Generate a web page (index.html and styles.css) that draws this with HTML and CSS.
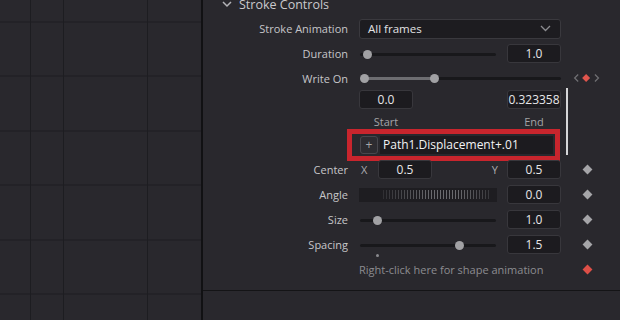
FILE: index.html
```html
<!DOCTYPE html>
<html lang="en">
<head>
    <meta charset="UTF-8">
    <title>Stroke Controls</title>
    <link rel="stylesheet" href="styles.css">
</head>
<body>
    <div id="app">
        <div id="viewer"></div>

        <div id="inspector">
            <div class="section-head">
                <svg class="chev" width="10" height="7" viewBox="0 0 10 7"><path d="M1 1 L5 5 L9 1" fill="none" stroke="#b4b4b8" stroke-width="1.5"/></svg>
                <span>Stroke Controls</span>
            </div>

            <div class="row">
                <div class="label">Stroke Animation</div>
                <div class="combo">
                    <span>All frames</span>
                    <svg width="11" height="7" viewBox="0 0 11 7"><path d="M1 1 L5.5 5.5 L10 1" fill="none" stroke="#8c8c90" stroke-width="1.3"/></svg>
                </div>
            </div>

            <div class="row">
                <div class="label">Duration</div>
                <div class="ctl">
                    <div class="slider"><span class="thumb" style="left: 8px"></span></div>
                    <div class="num">1.0</div>
                </div>
            </div>

            <div class="row row-write">
                <div class="label">Write On</div>
                <div class="slider wide">
                    <span class="fill" style="left: 5px; width: 70px"></span>
                    <span class="thumb" style="left: 5px"></span>
                    <span class="thumb" style="left: 75px"></span>
                </div>
                <div class="key">
                    <svg width="34" height="14" viewBox="0 0 34 14">
                        <path d="M7 3 L3 7 L7 11" fill="none" stroke="#707074" stroke-width="1.4"/>
                        <path d="M16 2.5 L20.5 7 L16 11.5 L11.5 7 Z" fill="#e0554d"/>
                        <path d="M26 3 L30 7 L26 11" fill="none" stroke="#707074" stroke-width="1.4"/>
                    </svg>
                </div>
            </div>

            <div class="row row-values">
                <div class="label"></div>
                <div class="ctl">
                    <div class="num">0.0</div>
                    <div class="num">0.323358</div>
                </div>
            </div>

            <div class="row row-caption">
                <div class="label"></div>
                <div class="ctl">
                    <div class="caption">Start</div>
                    <div class="caption">End</div>
                </div>
            </div>

            <div class="row row-expr">
                <div class="label"></div>
                <div class="expr">
                    <div class="plus">+</div>
                    <div class="expr-field">Path1.Displacement+.01</div>
                </div>
            </div>

            <div class="row row-center">
                <div class="label">Center</div>
                <div class="xy">
                    <span class="axis">X</span>
                    <div class="num">0.5</div>
                    <span class="axis axis-y">Y</span>
                    <div class="num">0.5</div>
                </div>
                <div class="key"><span class="diamond"></span></div>
            </div>

            <div class="row">
                <div class="label">Angle</div>
                <div class="ctl">
                    <div class="wheel"><span class="ticks"></span></div>
                    <div class="num">0.0</div>
                </div>
                <div class="key"><span class="diamond"></span></div>
            </div>

            <div class="row">
                <div class="label">Size</div>
                <div class="ctl">
                    <div class="slider"><span class="thumb" style="left: 18px"></span></div>
                    <div class="num">1.0</div>
                </div>
                <div class="key"><span class="diamond"></span></div>
            </div>

            <div class="row">
                <div class="label">Spacing</div>
                <div class="ctl">
                    <div class="slider">
                        <span class="thumb" style="left: 100px"></span>
                        <span class="dot" style="left: 18px"></span>
                    </div>
                    <div class="num">1.5</div>
                </div>
                <div class="key"><span class="diamond"></span></div>
            </div>

            <div class="row">
                <div class="label"></div>
                <div class="hint">Right-click here for shape animation</div>
                <div class="key"><span class="diamond red"></span></div>
            </div>

            <div class="footer"></div>

            <div class="cursor-line"></div>
        </div>
    </div>
</body>
</html>
```

FILE: styles.css
```css
body {
    margin: 0;
    width: 620px;
    height: 320px;
    overflow: hidden;
    background-color: #28272c;
    font-family: "Open Sans", "Noto Sans", sans-serif;
}

#app {
    display: flex;
    width: 620px;
    height: 320px;
}

#viewer {
    width: 201px;
    height: 320px;
    flex-shrink: 0;
    border-right: 2px solid #111113;
    background-color: #29282d;
    background-image:
        repeating-linear-gradient(to right, #1d1d21 0 1px, transparent 1px 84px),
        repeating-linear-gradient(to bottom, #1d1d21 0 1px, transparent 1px 54.4px);
    background-position: 63px 0, 0 21.5px;
}

#inspector {
    position: relative;
    flex: 1;
    background-color: #29282d;
}

.section-head {
    display: flex;
    align-items: center;
    height: 22px;
    margin-top: -7px;
    margin-bottom: 1px;
    padding-left: 19px;
    color: #c9c9cc;
    font-size: 12.5px;
}
.chev {
    margin-right: 7px;
}

.row {
    display: grid;
    grid-template-columns: 145px 202px 1fr;
    column-gap: 11px;
    align-items: center;
    height: 25px;
}
.row-write { height: 24px; }
.row-values { height: 19px; }
.row-caption { height: 25px; }
.row-expr { height: 22px; }
.row-center { height: 26px; }

.label {
    text-align: right;
    color: #c6c6c9;
    font-size: 11px;
}

.ctl {
    display: flex;
    justify-content: space-between;
    align-items: center;
}

.combo {
    display: flex;
    justify-content: space-between;
    align-items: center;
    box-sizing: border-box;
    height: 20px;
    padding: 0 9px 0 8px;
    background-color: #1d1c20;
    border: 1px solid #3a393e;
    border-radius: 3px;
    color: #e2e2e4;
    font-size: 11.5px;
}

.num {
    box-sizing: border-box;
    width: 54px;
    height: 19px;
    line-height: 17px;
    text-align: center;
    background-color: #1c1b1f;
    border: 1px solid #38373c;
    border-radius: 3px;
    color: #e6e6e8;
    font-size: 12px;
    white-space: nowrap;
    overflow: hidden;
}

.slider {
    position: relative;
    width: 137px;
    height: 10px;
}
.slider::before {
    content: "";
    position: absolute;
    left: 1px;
    right: 0;
    top: 4px;
    height: 3px;
    background-color: #18181b;
    border-radius: 2px;
}
.slider.wide {
    width: 202px;
}
.slider .fill {
    position: absolute;
    top: 4px;
    height: 3px;
    background-color: #6d6d71;
}
.thumb {
    position: absolute;
    top: 1px;
    width: 9px;
    height: 9px;
    margin-left: -4px;
    border-radius: 50%;
    background-color: #a1a1a4;
}
.dot {
    position: absolute;
    top: 14px;
    width: 3px;
    height: 3px;
    margin-left: -1px;
    border-radius: 50%;
    background-color: #8a8a8e;
}

.key {
    display: flex;
    justify-content: center;
    width: 30px;
}
.diamond {
    width: 7px;
    height: 7px;
    transform: rotate(45deg);
    background-color: #a5a5a8;
}
.diamond.red {
    background-color: #dd4f47;
}

.caption {
    width: 54px;
    text-align: center;
    color: #a3a3a7;
    font-size: 11px;
}

.expr {
    display: flex;
    align-items: center;
    box-sizing: border-box;
    width: 203px;
    height: 22px;
    margin-left: -7px;
    padding: 0 2px 0 8px;
    gap: 2px;
    outline: 5px solid #c8252d;
}
.plus {
    box-sizing: border-box;
    width: 18px;
    height: 18px;
    line-height: 15px;
    text-align: center;
    background-color: #2d2c31;
    border: 1px solid #48474d;
    border-radius: 3px;
    color: #a8a8ac;
    font-size: 12px;
}
.expr-field {
    flex: 1;
    height: 18px;
    line-height: 18px;
    padding-left: 3px;
    background-color: #1c1b1f;
    color: #f2f2f4;
    font-size: 12px;
}

.xy {
    display: grid;
    grid-template-columns: 19px 54px 1fr 54px;
    align-items: center;
}
.axis {
    padding-left: 2px;
    color: #a9a9ad;
    font-size: 11px;
}
.axis-y {
    justify-self: end;
    margin-right: 9px;
}

.wheel {
    display: flex;
    align-items: center;
    width: 138px;
    height: 14px;
    background-color: #1e1d21;
}
.ticks {
    width: 107px;
    height: 9px;
    margin-left: 24px;
    background-image: repeating-linear-gradient(to right, #6a6a6e 0 1px, transparent 1px 3px);
    -webkit-mask-image: linear-gradient(to right, rgba(0,0,0,0.25), #000 45%, #000 70%, rgba(0,0,0,0.35));
    mask-image: linear-gradient(to right, rgba(0,0,0,0.25), #000 45%, #000 70%, rgba(0,0,0,0.35));
}

.hint {
    color: #8c8c90;
    font-size: 11px;
    white-space: nowrap;
}

.footer {
    margin-top: 8px;
    border-top: 1px solid #141416;
}

.cursor-line {
    position: absolute;
    left: 363px;
    top: 88px;
    width: 2px;
    height: 67px;
    background-color: #d6d6d8;
}
```
